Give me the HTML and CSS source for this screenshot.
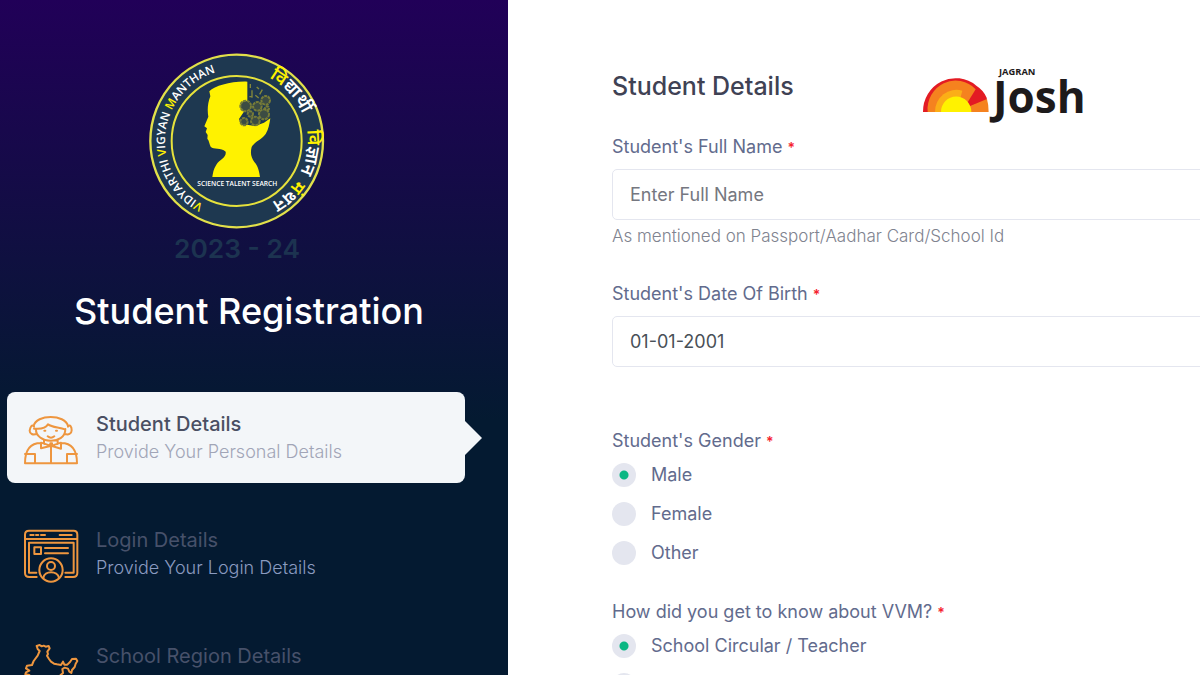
FILE: index.html
```
<!DOCTYPE html>
<html lang="en">
<head>
    <meta charset="UTF-8">
    <meta name="viewport" content="width=device-width, initial-scale=1">
    <title>Student Registration</title>
    <link rel="stylesheet" href="styles.css">
</head>
<body>
<div class="page">

    <!-- left side: logo and steps -->
    <aside class="sidebar">
        <svg class="logo" viewBox="27 0 600 675" role="img" aria-label="Vidyarthi Vigyan Manthan 2023 - 24">
            <defs>
                <path id="arcLeft" d="M190 479 A216 216 0 0 1 220 84"/>
                <path id="arcRight" d="M387 99 A212 212 0 0 1 376 482"/>
            </defs>
            <circle cx="290" cy="288" r="259" fill="#1e3850" stroke="#e2e04a" stroke-width="7"/>
            <circle cx="290" cy="288" r="195" fill="none" stroke="#e6e23c" stroke-width="6"/>
            <text class="ring-text"><textPath href="#arcLeft"><tspan class="hl">V</tspan>IDYARTHI <tspan class="hl">V</tspan>IGYAN <tspan class="hl">M</tspan>ANTHAN</textPath></text>
            <text class="ring-text hindi"><textPath href="#arcRight"><tspan class="hl">वि</tspan>द्यार्थी</textPath></text>
            <text class="ring-text hindi"><textPath href="#arcRight" startOffset="200"><tspan class="hl">वि</tspan>ज्ञान</textPath></text>
            <text class="ring-text hindi"><textPath href="#arcRight" startOffset="354"><tspan class="hl">मं</tspan>थन</textPath></text>
            <path fill="#fff200" d="M322 110 C275 108 225 122 208 139 L211 154 C202 175 202 200 205 215 L193 244 L201 250 L197 261 L203 270 L202 281 C208 288 208 297 212 305 C221 314 243 306 257 320 C260 338 240 343 229 359 C220 372 219 384 217 396 L360 396 C358 380 354 363 343 351 C334 338 330 326 335 306 C345 289 365 284 377 267 C386 252 388 238 391 220 L372 233 L345 243 L320 239 L303 238 L297 222 L322 185 Z"/>
            <g fill="#3c4c43" stroke="#777c38" stroke-width="6" stroke-dasharray="9 2">
                <circle cx="317" cy="183" r="16"/>
                <circle cx="352" cy="184" r="13"/>
                <circle cx="377" cy="166" r="13"/>
                <circle cx="312" cy="230" r="11"/>
                <circle cx="346" cy="228" r="13"/>
                <circle cx="372" cy="208" r="15"/>
                <circle cx="331" cy="207" r="8"/>
                <circle cx="381" cy="190" r="6"/>
            </g>
            <path fill="none" stroke="#85893a" stroke-width="4" d="M331 117v12M336 136v22M350 126l7 6M346 151l10 8M367 134l-8 14M328 155h6"/>
            <text class="logo-caption" x="292" y="422">SCIENCE TALENT SEARCH</text>
            <text class="logo-year" x="291" y="639">2023 - 24</text>
        </svg>

        <h1 class="title">Student Registration</h1>

        <ol class="steps">
            <li class="step active">
                <!-- student -->
                <svg class="step-icon" viewBox="72 77 162 162" aria-hidden="true">
                    <path d="M101 122C108 86 196 86 204 122M102 124C96 116 91 124 89 136c0 10 10 13 20 10M204 124c6-8 11 0 11 11 0 11-10 14-20 11M102 130c20 2 36-2 42-13 13 10 35 8 51 15M108 131c-3 43 88 51 88 0M132 163v13M173 163v13M123 172l28 9v-7h5v7l27-9v18l-27-8h-5l-28 7zM123 173c-32 0-48 20-48 61h156c0-41-18-61-48-61M153 183v50M75 206h30v27M231 206h-30v27"/>
                    <path d="M133 136h3M168 136h3M143 153q10 8 20 0"/>
                </svg>
                <div>
                    <h2 class="step-title">Student Details</h2>
                    <p class="step-desc">Provide Your Personal Details</p>
                </div>
            </li>
            <li class="step">
                <!-- login window -->
                <svg class="step-icon" viewBox="72 50 162 162" aria-hidden="true">
                    <path d="M110 200H88Q75 200 75 188V73Q75 61 87 61H221Q232 61 232 73V188Q232 200 219 200H196M75 86H232M109 187H87V97H221V187H196M103 111h20v20h-20zM135 113h69M135 129h69"/>
                    <path d="M91 74h10M108 74h7M123 74h12M179 74h36"/>
                    <circle cx="153" cy="179" r="35"/>
                    <circle cx="153" cy="167" r="12"/>
                    <path d="M130 203c3-23 43-23 47 0"/>
                </svg>
                <div>
                    <h2 class="step-title">Login Details</h2>
                    <p class="step-desc">Provide Your Login Details</p>
                </div>
            </li>
            <li class="step">
                <!-- map of India -->
                <svg class="step-icon" viewBox="72 397 162 162" aria-hidden="true">
                    <path d="M110 406l9-3 6 4 6-2 6 3 9-2 3 7-7 10 2 7-3 5 6 10 6 8 9 6 9 2 12 2 6-10 4 9 9 0 8-8 6-9 12-1 4 7-5 8-3 10-8 9-2 9-6-4-4-9-10-3-7 4 2 12-8 7-8 6-20 22-10 14-3 24-8 12-9-10-12-31-7-24-12 4-10-11 6-7-12-2 2-6 10-5-10-7 3-8 15-2 5-12 12-16 6-14-6-6z"/>
                </svg>
                <div>
                    <h2 class="step-title">School Region Details</h2>
                    <p class="step-desc">Provide Your School Details</p>
                </div>
            </li>
        </ol>
    </aside>

    <!-- right side: the form -->
    <main class="content">
        <form class="form">
            <div class="form-header">
                <h2 class="form-title">Student Details</h2>
                <svg class="josh" viewBox="30 33 510 180" role="img" aria-label="Jagran Josh">
                    <path fill="#e31b23" d="M42 171A98 100 0 0 1 202 92Q224 106 233 128L234 136L140 171z"/>
                    <path fill="#f5821f" d="M56 171A84 86 0 0 1 200 103L176 142L140 171z"/>
                    <path fill="#fbae17" d="M78 171A64 66 0 0 1 160 107L155 126L140 171z"/>
                    <path fill="#f5821f" d="M140 171L234 132Q239 150 239 171z"/>
                    <path fill="#fff200" d="M96 171A45 46 0 0 1 187 171z"/>
                    <text class="josh-small" x="270" y="59">JAGRAN</text>
                    <text class="josh-big" x="252" y="173">Josh</text>
                </svg>
            </div>

            <div class="form-group">
                <label class="form-label" for="fullName">Student's Full Name <span class="required">*</span></label>
                <input class="form-control" type="text" id="fullName" placeholder="Enter Full Name">
                <p class="help">As mentioned on Passport/Aadhar Card/School Id</p>
            </div>

            <div class="form-group">
                <label class="form-label" for="dob">Student's Date Of Birth <span class="required">*</span></label>
                <input class="form-control" type="text" id="dob" value="01-01-2001">
            </div>

            <fieldset class="form-group">
                <legend class="form-label">Student's Gender <span class="required">*</span></legend>
                <div class="radio-list">
                    <label class="radio"><input type="radio" name="gender" checked> Male</label>
                    <label class="radio"><input type="radio" name="gender"> Female</label>
                    <label class="radio"><input type="radio" name="gender"> Other</label>
                </div>
            </fieldset>

            <fieldset class="form-group">
                <legend class="form-label">How did you get to know about VVM? <span class="required">*</span></legend>
                <div class="radio-list">
                    <label class="radio"><input type="radio" name="source" checked> School Circular / Teacher</label>
                    <label class="radio"><input type="radio" name="source"> Friends</label>
                </div>
            </fieldset>
        </form>
    </main>

</div>
</body>
</html>
```
FILE: styles.css
```
* {
    box-sizing: border-box;
}
body {
    margin: 0;
    font-family: "Inter", sans-serif;
    background-color: #ffffff;
    overflow-x: hidden;
}
h1, h2, p, ol {
    margin: 0;
    padding: 0;
}
.page {
    display: grid;
    grid-template-columns: minmax(0, 508fr) minmax(0, 692fr);
    height: 100vh;
    overflow: hidden;
}

/* sidebar */
.sidebar {
    display: flex;
    flex-direction: column;
    align-items: center;
    padding: 45px 17px 0 7px;
    background: linear-gradient(#210058, #041a31 420px);
}
.logo {
    width: 200px;
    flex: none;
}
.ring-text {
    font-family: "Open Sans", sans-serif;
    font-size: 35px;
    font-weight: 600;
    fill: #ffffff;
}
.hindi {
    font-family: "Noto Sans", "Noto Sans Devanagari", sans-serif;
    font-size: 54px;
}
.hl {
    fill: #fff200;
}
.logo-caption {
    font-family: "Open Sans", sans-serif;
    font-size: 20px;
    font-weight: 600;
    fill: #ffffff;
    text-anchor: middle;
}
.logo-year {
    font-size: 79px;
    font-weight: 600;
    fill: #1c3350;
    text-anchor: middle;
}
.title {
    margin-top: 16px;
    color: #ffffff;
    font-size: 36px;
    font-weight: 500;
    line-height: 50px;
}
.steps {
    display: flex;
    flex-direction: column;
    gap: 25px;
    width: 100%;
    margin-top: 56px;
    padding-right: 26px;
    list-style: none;
}
.step {
    position: relative;
    display: flex;
    align-items: center;
    gap: 18px;
    padding: 18px 17px;
    border-radius: 8px;
}
.active {
    background-color: #f3f6f9;
}
.active::after {
    content: "";
    position: absolute;
    left: 100%;
    top: 50%;
    border: 17px solid transparent;
    border-left-color: #f3f6f9;
    border-right-width: 0;
    transform: translateY(-50%);
}
.step-icon {
    flex: none;
    width: 54px;
    height: 54px;
    overflow: visible;
    fill: none;
    stroke: #ee963f;
    stroke-width: 6;
    stroke-linejoin: round;
    stroke-linecap: round;
}
.step-title {
    color: #47516a;
    font-size: 20px;
    font-weight: 400;
    line-height: 28px;
}
.step-desc {
    color: #8b9bc0;
    font-size: 18px;
    font-weight: 300;
    line-height: 27px;
}
.active .step-title {
    color: #4a4f63;
    font-weight: 500;
}
.active .step-desc {
    color: #a1a5b7;
}

/* form */
.content {
    padding: 66px 0 0 104px;
}
.form {
    margin-right: -24px;
}
.form-header {
    display: flex;
    justify-content: space-between;
    align-items: flex-start;
    padding-right: 22%;
    margin-bottom: 10px;
}
.form-title {
    color: #3f4254;
    font-size: 25px;
    font-weight: 500;
    line-height: 40px;
}
.josh {
    flex: none;
    width: 170px;
    height: 60px;
}
.josh-small,
.josh-big {
    font-family: "Open Sans", sans-serif;
    font-weight: 700;
    fill: #1d1a1b;
}
.josh-small {
    font-size: 28px;
}
.josh-big {
    font-size: 132px;
}
.form-group {
    min-width: 0;
    min-height: 111px;
    margin: 0 0 36px;
    padding: 0;
    border: 0;
}
.form-label {
    display: block;
    margin-bottom: 11px;
    padding: 0;
    color: #626b8d;
    font-size: 18px;
    line-height: 22px;
}
.required {
    color: #f5222d;
    font-size: 14px;
    font-weight: 600;
    line-height: 1;
}
.form-control {
    display: block;
    width: 100%;
    height: 51px;
    padding: 0 17px;
    border: 1px solid #e4e6ef;
    border-radius: 5px;
    background-color: #ffffff;
    color: #495057;
    font-family: inherit;
    font-size: 18px;
}
.form-control::placeholder {
    color: #757780;
}
.help {
    margin-top: 5px;
    color: #80838f;
    font-size: 17px;
    font-weight: 300;
    line-height: 22px;
}
.radio-list {
    display: flex;
    flex-direction: column;
    gap: 15px;
}
.radio {
    display: flex;
    align-items: center;
    gap: 15px;
    color: #626b8d;
    font-size: 18px;
    line-height: 24px;
}
.radio input {
    appearance: none;
    width: 24px;
    height: 24px;
    margin: 0;
    border-radius: 50%;
    background-color: #e4e6ef;
}
.radio input:checked {
    background-image: radial-gradient(circle, #0bb783 4px, transparent 5px);
}
```
